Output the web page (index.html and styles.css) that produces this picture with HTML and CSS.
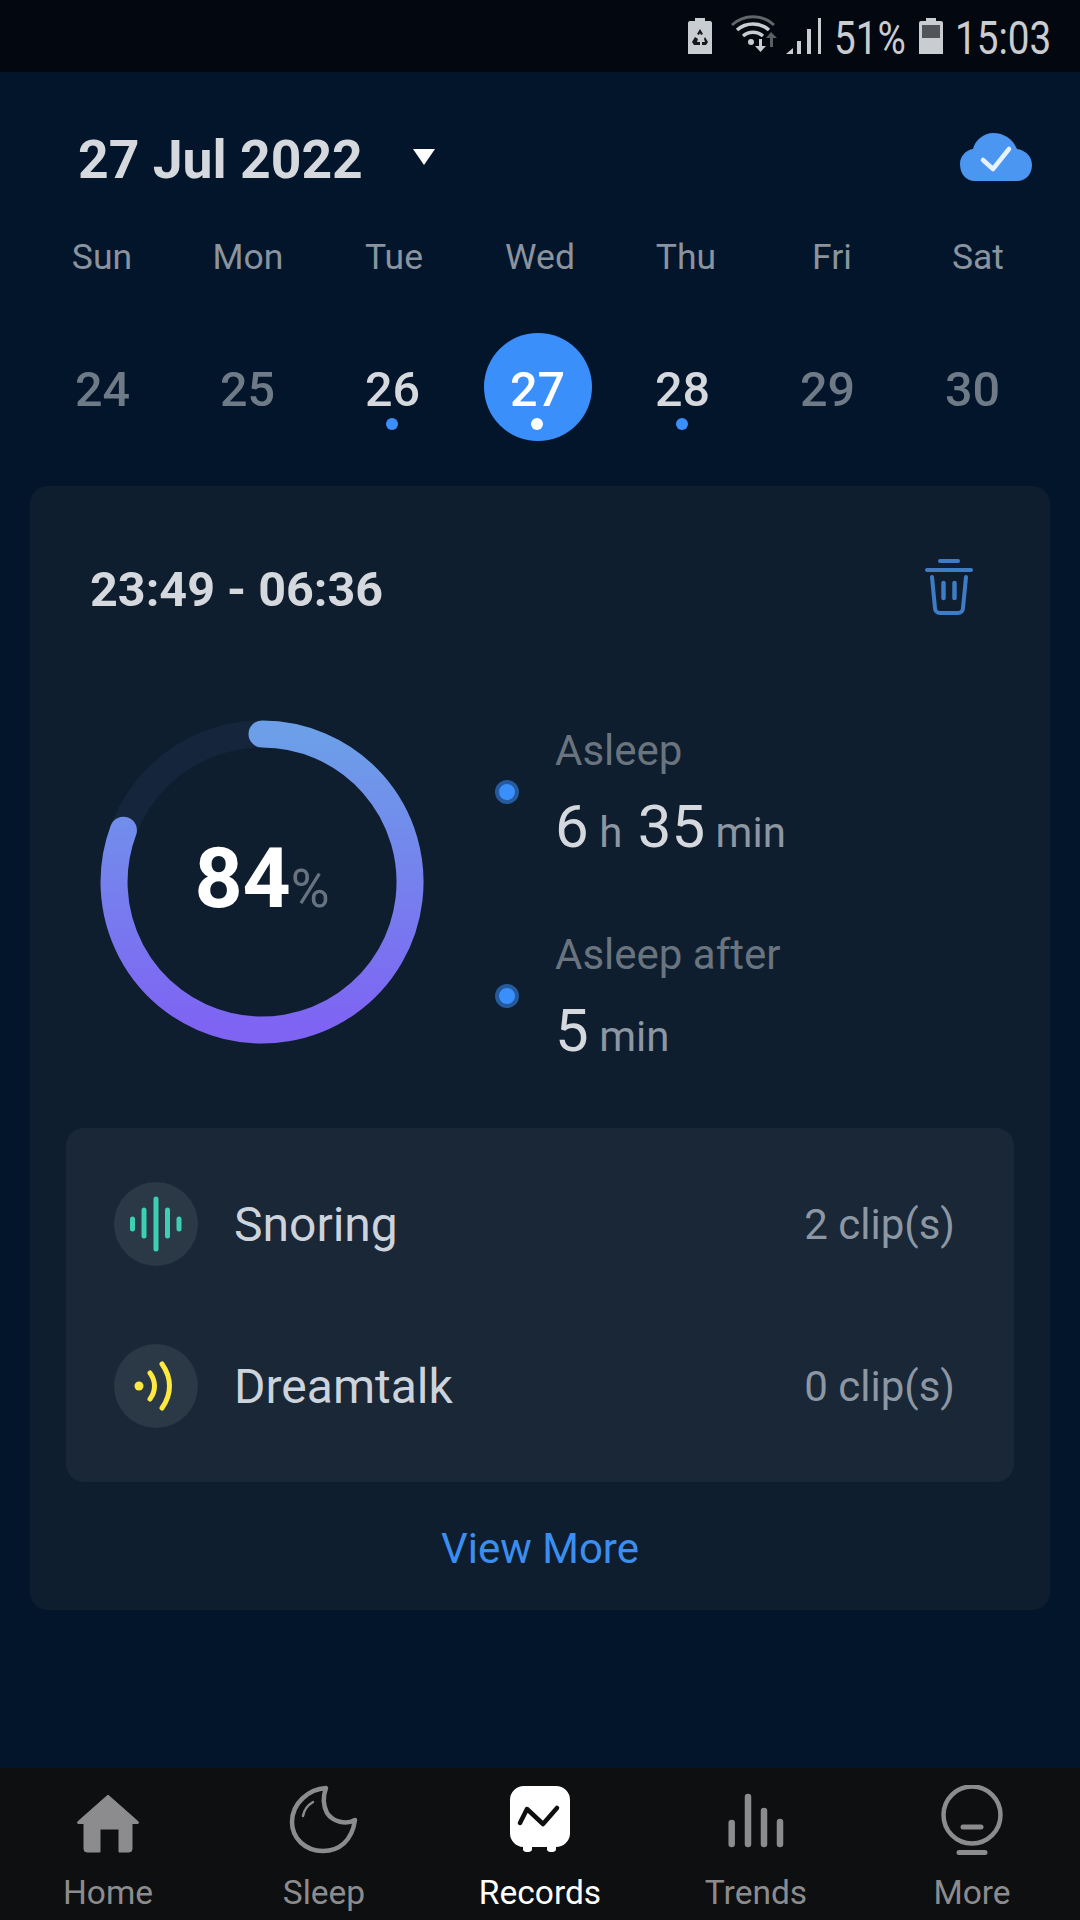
FILE: index.html
```html
<!DOCTYPE html>
<html lang="en">
<head>
<meta charset="utf-8">
<title>Records</title>
<link rel="stylesheet" href="styles.css">
</head>
<body>
<div class="status">
  <svg class="st-charge" viewBox="0 0 24 36"><path d="M7 0h10v3h5a2 2 0 0 1 2 2v31H0V5a2 2 0 0 1 2-2h5z" fill="#c9ccd0"/><path d="M12 11l3 5-2 1-1-2-1 2-2-1zM7 19l3 2-1 3h3v3H6l-2-3zM17 19l3 5-2 3h-4v-3h3l-1-3z" fill="#15181c"/></svg>
  <svg class="st-wifi" viewBox="0 0 50 42"><path d="M2 10C14 -1 32 -1 44 10" fill="none" stroke="#62666b" stroke-width="3"/><path d="M7 15C16 7 30 7 39 15M13 21C19 16 27 16 33 21" fill="none" stroke="#c9ccd0" stroke-width="3.4"/><circle cx="21" cy="27" r="3" fill="#c9ccd0"/><path d="M29 24h3v7h4l-5.500 6-5.500-6h4z" fill="#c9ccd0"/><path d="M41 17l6 6h-4v9h-3v-9h-4z" fill="#5b5f64"/></svg>
  <svg class="st-signal" viewBox="0 0 36 36"><path d="M0 36l7-6v6z" fill="#c9ccd0"/><rect x="11" y="23" width="4" height="13" fill="#c9ccd0"/><rect x="21" y="11" width="4" height="25" fill="#c9ccd0"/><rect x="32" y="0" width="3" height="36" fill="#c9ccd0"/></svg>
  <span class="st-text st-pct">51%</span>
  <svg class="st-batt" viewBox="0 0 24 36"><path d="M7 0h10v3h5a2 2 0 0 1 2 2v31H0V5a2 2 0 0 1 2-2h5z" fill="#c9ccd0"/><rect x="3" y="7" width="18" height="13" fill="#51555a"/></svg>
  <span class="st-text st-time">15:03</span>
</div>

<main class="main">
  <header class="header">
    <div class="title-wrap">
      <h1 class="title">27 Jul 2022</h1>
      <svg class="caret" viewBox="0 0 24 18"><path d="M1 1h22L12 17z" fill="#fff"/></svg>
    </div>
    <svg class="cloud" viewBox="0 0 72 48"><path d="M15 48C6 48 0 41 0 31c0-8 6-14 13-15C15 7 24 0 33 0c11 0 20 6 24 16 8 1 15 7 15 16 0 9-6 16-15 16z" fill="#4b96f0"/><path d="M23 27l10 9 16-20" fill="none" stroke="#e8f2fd" stroke-width="4.500" stroke-linecap="round" stroke-linejoin="round"/></svg>
  </header>

  <div class="weekdays">
    <span>Sun</span><span>Mon</span><span>Tue</span><span>Wed</span><span>Thu</span><span>Fri</span><span>Sat</span>
  </div>

  <div class="dates">
    <div class="date">24</div>
    <div class="date">25</div>
    <div class="date has-data">26<i class="dot"></i></div>
    <div class="date has-data selected">27<i class="dot"></i></div>
    <div class="date has-data">28<i class="dot"></i></div>
    <div class="date">29</div>
    <div class="date">30</div>
  </div>

  <section class="card">
    <div class="card-head">
      <div class="time-range">23:49 - 06:36</div>
      <svg class="trash" viewBox="0 0 48 56"><path d="M15 2h18" stroke="#3e7cc4" stroke-width="4" stroke-linecap="round" fill="none"/><path d="M2 11h44" stroke="#3e7cc4" stroke-width="4" stroke-linecap="round" fill="none"/><path d="M7 18l3 31a5 5 0 0 0 5 5h18a5 5 0 0 0 5-5l3-31" stroke="#3e7cc4" stroke-width="4" fill="none" stroke-linecap="round"/><path d="M18.500 24v15M29.500 24v15" stroke="#3e7cc4" stroke-width="4.500" stroke-linecap="round" fill="none"/></svg>
    </div>

    <div class="summary">
      <div class="ring">
        <svg class="ring-svg" viewBox="0 0 324 324">
          <defs>
            <linearGradient id="ringGrad" gradientUnits="userSpaceOnUse" x1="0" y1="14" x2="0" y2="310">
              <stop offset="0" stop-color="#6c9fe8"/>
              <stop offset="1" stop-color="#7f63f3"/>
            </linearGradient>
          </defs>
          <circle cx="162" cy="162" r="148" fill="none" stroke="#15263c" stroke-width="27"/>
          <path d="M162 14A148 148 0 1 1 23.400 110.200" fill="none" stroke="url(#ringGrad)" stroke-width="27" stroke-linecap="round"/>
        </svg>
        <div class="score"><span class="score-num">84</span><span class="score-unit">%</span></div>
      </div>
      <div class="legend">
        <div class="legend-item">
          <i class="legend-dot"></i>
          <div class="legend-text">
            <div class="legend-label">Asleep</div>
            <div class="legend-value"><b>6</b> <span class="u-h">h</span> <b>35</b> <span>min</span></div>
          </div>
        </div>
        <div class="legend-item">
          <i class="legend-dot"></i>
          <div class="legend-text">
            <div class="legend-label">Asleep after</div>
            <div class="legend-value"><b>5</b> <span>min</span></div>
          </div>
        </div>
      </div>
    </div>

    <div class="panel">
      <div class="panel-row">
        <div class="panel-icon">
          <svg viewBox="0 0 84 84"><g stroke="#3ccfb4" stroke-linecap="round" fill="none"><path d="M18.500 37v10" stroke-width="5"/><path d="M30 28v26" stroke-width="5"/><path d="M42 17v50" stroke-width="5"/><path d="M53.500 28v26" stroke-width="5"/><path d="M65 37v10" stroke-width="5"/></g></svg>
        </div>
        <span class="panel-name">Snoring</span>
        <span class="panel-count">2 clip(s)</span>
      </div>
      <div class="panel-row">
        <div class="panel-icon">
          <svg viewBox="0 0 84 84"><circle cx="25" cy="42" r="4.500" fill="#fde93f"/><path d="M36 29c6 8 6 18 0 26M48 20c10 14 10 30 0 44" fill="none" stroke="#fde93f" stroke-width="5" stroke-linecap="round"/></svg>
        </div>
        <span class="panel-name">Dreamtalk</span>
        <span class="panel-count">0 clip(s)</span>
      </div>
    </div>

    <div class="view-more">View More</div>
  </section>
</main>

<nav class="nav">
  <div class="nav-item">
    <svg viewBox="0 0 72 72"><path d="M36 10L66 36.500a1 1 0 0 1-1 2H60V64a3 3 0 0 1-3 3H47V44H28V67H15a3 3 0 0 1-3-3V38.500H7a1 1 0 0 1-1-2z" fill="#8c8c8e" stroke="#8c8c8e" stroke-width="1" stroke-linejoin="round"/></svg>
    <span>Home</span>
  </div>
  <div class="nav-item">
    <svg viewBox="0 0 72 72"><path d="M38 3C21 4 4 18 4 37c0 16 13 29 31 29 16 0 29-10 32-31-9 5-22 2-28-7-4-8-4-17-1-25z" fill="none" stroke="#8c8c8e" stroke-width="4.500" stroke-linejoin="round"/><path d="M15 31c1-6 5-11 10-14" fill="none" stroke="#8c8c8e" stroke-width="2.500" stroke-linecap="round"/></svg>
    <span>Sleep</span>
  </div>
  <div class="nav-item active">
    <svg viewBox="0 0 72 72"><path d="M20 1h32a14 14 0 0 1 14 14v34a14 14 0 0 1-14 13v1a3.500 3.500 0 0 1-3 4h-3a3.500 3.500 0 0 1-3-4v-1H28v1a3.500 3.500 0 0 1-3 4h-3a3.500 3.500 0 0 1-3-4v-1A14 14 0 0 1 6 49V15A14 14 0 0 1 20 1z" fill="#fff"/><path d="M16 38l7-14 16 15 14-16" fill="none" stroke="#0e0f11" stroke-width="4.500" stroke-linecap="round" stroke-linejoin="round"/></svg>
    <span>Records</span>
  </div>
  <div class="nav-item">
    <svg viewBox="0 0 72 72"><g stroke="#8c8c8e" stroke-width="6.500" stroke-linecap="round"><path d="M11.700 38v21"/><path d="M28 12v47"/><path d="M44 26v33"/><path d="M60 37v22"/></g></svg>
    <span>Trends</span>
  </div>
  <div class="nav-item">
    <svg viewBox="0 0 72 72"><circle cx="36" cy="30" r="28.500" fill="none" stroke="#8c8c8e" stroke-width="4.500"/><path d="M27 42h18" stroke="#8c8c8e" stroke-width="5" stroke-linecap="round"/><path d="M23 67.500h26" stroke="#8c8c8e" stroke-width="5" stroke-linecap="round"/></svg>
    <span>More</span>
  </div>
</nav>
</body>
</html>
```

FILE: styles.css
```css
* { box-sizing: border-box; }
html, body { margin: 0; padding: 0; }
body {
  width: 1080px;
  height: 1920px;
  overflow: hidden;
  display: flex;
  flex-direction: column;
  background: #03152a;
  font-family: Roboto, "Noto Sans", sans-serif;
  color: #d5d8dd;
}

/* status bar */
.status {
  height: 72px;
  flex: none;
  background: #03070f;
  display: flex;
  align-items: center;
  padding-left: 688px;
}
.status svg { display: block; flex: none; }
.st-charge { width: 24px; height: 36px; }
.st-wifi { width: 50px; height: 42px; margin-left: 18px; }
.st-signal { width: 36px; height: 36px; margin-left: 6px; }
.st-batt { width: 24px; height: 36px; margin-left: 13px; }
.st-text {
  font-size: 46px;
  line-height: 76px;
  height: 72px;
  color: #c9ccd0;
  display: inline-block;
  transform: scaleX(.84);
  transform-origin: left center;
}
.st-pct { width: 72px; margin-left: 12px; }
.st-time { margin-left: 12px; }

/* header */
.main { flex: 1; min-height: 0; }
.header {
  height: 60px;
  margin-top: 58px;
  padding: 0 48px 0 78px;
  display: flex;
  align-items: center;
  justify-content: space-between;
}
.title-wrap { display: flex; align-items: center; }
.title {
  margin: 0;
  font-size: 53.500px;
  line-height: 60px;
  font-weight: 700;
  color: #d5d8dd;
}
.caret { width: 24px; height: 18px; margin-left: 49px; margin-top: -6px; display: block; }
.cloud { width: 72px; height: 48px; display: block; margin-top: -6px; }

.weekdays {
  margin-top: 47px;
  padding-left: 29px;
  display: grid;
  grid-template-columns: repeat(7, 146px);
  text-align: center;
  font-size: 35.500px;
  line-height: 40px;
  color: #8a939e;
}

.dates {
  margin-top: 56px;
  padding-left: 30px;
  display: grid;
  grid-template-columns: repeat(7, 145px);
}
.date {
  position: relative;
  justify-self: center;
  width: 108px;
  height: 108px;
  border-radius: 50%;
  text-align: center;
  font-size: 48.500px;
  font-weight: 500;
  line-height: 113px;
  color: #6f7a87;
}
.date.has-data { color: #d5d8dd; }
.date.selected { background: #3a8ffb; color: #fff; }
.dot {
  position: absolute;
  left: 47px;
  top: 85px;
  width: 12px;
  height: 12px;
  border-radius: 50%;
  background: #3a8ffb;
}
.selected .dot { background: #fff; }

/* card */
.card {
  margin: 45px 30px 0;
  height: 1124px;
  background: #0f1e2f;
  border-radius: 18px;
  padding-top: 73px;
}
.card-head {
  height: 60px;
  padding: 0 77px 0 60px;
  display: flex;
  align-items: center;
  justify-content: space-between;
}
.time-range { font-size: 48.500px; font-weight: 700; color: #d5d8dd; }
.trash { width: 48px; height: 56px; display: block; margin-top: -4px; }

.summary {
  margin-top: 101px;
  height: 324px;
  padding-left: 70px;
  display: flex;
  align-items: flex-start;
}
.ring { position: relative; width: 324px; height: 324px; flex: none; }
.ring-svg { display: block; width: 324px; height: 324px; }
.score {
  position: absolute;
  inset: 0;
  display: flex;
  align-items: baseline;
  justify-content: center;
  line-height: 318px;
}
.score-num { font-size: 84px; font-weight: 700; color: #fff; }
.score-unit { font-size: 53px; color: #68737f; }

.legend {
  margin-left: 71px;
  margin-top: 9px;
  flex: none;
  display: flex;
  flex-direction: column;
  gap: 67px;
}
.legend-item { display: flex; align-items: center; gap: 36px; }
.legend-dot {
  width: 24px;
  height: 24px;
  margin-bottom: 12px;
  flex: none;
  border-radius: 50%;
  background: #3a8ffb;
  border: 4px solid #255a9c;
}
.legend-label { font-size: 42px; line-height: 44px; color: #69747f; }
.legend-value {
  margin-top: 21px;
  font-size: 42px;
  line-height: 66px;
  color: #8c97a3;
}
.legend-value b { font-size: 60px; font-weight: 400; color: #d5d8dd; }
.u-h { margin-right: 5px; }

.panel {
  margin: 84px 36px 0;
  padding: 54px 59px 54px 48px;
  background: #192737;
  border-radius: 18px;
  display: flex;
  flex-direction: column;
  gap: 78px;
}
.panel-row { display: flex; align-items: center; }
.panel-icon {
  width: 84px;
  height: 84px;
  border-radius: 50%;
  background: #2b3846;
  flex: none;
}
.panel-icon svg { display: block; width: 84px; height: 84px; }
.panel-name { margin-left: 36px; font-size: 48px; color: #ccd3dc; flex: 1; }
.panel-count { font-size: 42px; color: #8c97a3; }

.view-more {
  margin-top: 43px;
  text-align: center;
  font-size: 42px;
  line-height: 48px;
  color: #3b8ef0;
}

/* nav */
.nav {
  flex: none;
  height: 152px;
  background: #0e0f11;
  padding-top: 17px;
  display: grid;
  grid-template-columns: repeat(5, 216px);
}
.nav-item {
  display: flex;
  flex-direction: column;
  align-items: center;
  font-size: 33.500px;
  line-height: 44px;
  color: #8c8c8e;
}
.nav-item svg { display: block; width: 72px; height: 72px; margin-bottom: 14px; }
.nav-item.active { color: #fff; }
```
